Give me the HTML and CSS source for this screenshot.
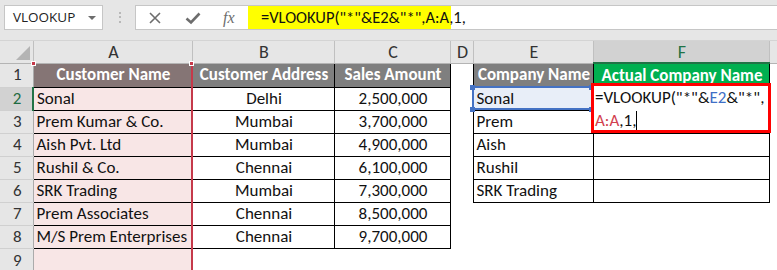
FILE: index.html
```html
<!DOCTYPE html>
<html>
	<head>
		<title>VLOOKUP wildcard</title>
		<meta name="viewport" content="width=device-width, initial-scale=1">
		<link rel="stylesheet" href="styles.css">
	</head>
	<body>
	<div id="toolbar">
		<div class="name-box">VLOOKUP<span class="caret"></span></div>
		<div class="grip"></div>
		<div class="fx-box">
			<div class="fx-buttons">
				<svg width="14" height="14" viewBox="0 0 14 14"><path d="M2 2 L12 12 M12 2 L2 12" stroke="#6d6d6d" stroke-width="1.6" fill="none"/></svg>
				<svg width="16" height="14" viewBox="0 0 16 14"><path d="M1.5 7.5 L6 11.5 L14.5 2.5" stroke="#6d6d6d" stroke-width="2.6" fill="none"/></svg>
				<span class="fx">fx</span>
			</div>
			<div class="formula"><span class="hl">=VLOOKUP("*"&amp;E2&amp;"*",A:A,1,</span></div>
		</div>
	</div>

	<div id="sheet-wrap">
		<table class="sheet">
			<colgroup>
				<col style="width:33px"><col style="width:159px"><col style="width:142px"><col style="width:116px">
				<col style="width:23px"><col style="width:120px"><col style="width:176px"><col>
			</colgroup>
			<tr class="col-heads">
				<th class="corner"><span class="tri"></span></th><th>A</th><th>B</th><th>C</th><th>D</th><th>E</th><th class="active">F</th><th></th>
			</tr>
			<tr class="r1">
				<td class="rh">1</td>
				<td class="hd hd-a">Customer Name</td><td class="hd">Customer Address</td><td class="hd">Sales Amount</td>
				<td></td><td class="hd">Company Name</td><td class="hd hd-green">Actual Company Name</td><td></td>
			</tr>
			<tr>
				<td class="rh rh-active">2</td>
				<td class="cell a">Sonal</td><td class="cell mid">Delhi</td><td class="cell mid">2,500,000</td>
				<td></td><td class="cell e2">Sonal</td><td class="cell"></td><td></td>
			</tr>
			<tr>
				<td class="rh">3</td>
				<td class="cell a">Prem Kumar &amp; Co.</td><td class="cell mid">Mumbai</td><td class="cell mid">3,700,000</td>
				<td></td><td class="cell">Prem</td><td class="cell"></td><td></td>
			</tr>
			<tr>
				<td class="rh">4</td>
				<td class="cell a">Aish Pvt. Ltd</td><td class="cell mid">Mumbai</td><td class="cell mid">4,900,000</td>
				<td></td><td class="cell">Aish</td><td class="cell"></td><td></td>
			</tr>
			<tr>
				<td class="rh">5</td>
				<td class="cell a">Rushil &amp; Co.</td><td class="cell mid">Chennai</td><td class="cell mid">6,100,000</td>
				<td></td><td class="cell">Rushil</td><td class="cell"></td><td></td>
			</tr>
			<tr>
				<td class="rh">6</td>
				<td class="cell a">SRK Trading</td><td class="cell mid">Mumbai</td><td class="cell mid">7,300,000</td>
				<td></td><td class="cell">SRK Trading</td><td class="cell"></td><td></td>
			</tr>
			<tr>
				<td class="rh">7</td>
				<td class="cell a">Prem Associates</td><td class="cell mid">Chennai</td><td class="cell mid">8,500,000</td>
				<td></td><td></td><td></td><td></td>
			</tr>
			<tr>
				<td class="rh">8</td>
				<td class="cell a">M/S Prem Enterprises</td><td class="cell mid">Chennai</td><td class="cell mid">9,700,000</td>
				<td></td><td></td><td></td><td></td>
			</tr>
			<tr class="r9">
				<td class="rh">9</td>
				<td class="a-fill"></td><td></td><td></td><td></td><td></td><td></td><td></td>
			</tr>
		</table>

		<!-- range highlight for A:A -->
		<div class="range-a"></div>
		<div class="knob red" style="left:31px;top:20px"></div>
		<div class="knob red" style="left:189px;top:20px"></div>

		<!-- range highlight for E2 -->
		<div class="range-e2"></div>
		<div class="knob blue" style="left:470px;top:44px"></div>
		<div class="knob blue" style="left:589px;top:44px"></div>
		<div class="knob blue" style="left:470px;top:66px"></div>
		<div class="knob blue" style="left:589px;top:66px"></div>

		<!-- in-cell editor -->
		<div class="editor">
			<div>=VLOOKUP("*"&amp;<span class="ref-blue">E2</span>&amp;"*",</div>
			<div><span class="ref-red">A:A</span>,1,<span class="cursor"></span></div>
		</div>
	</div>
	</body>
</html>
```

FILE: styles.css
```css
body{
	margin:0;
	background:#fff;
	font-family: "Carlito", "Lato", sans-serif;
	overflow:hidden;
	height:270px;
}
#toolbar{
	display:flex;
	align-items:flex-start;
	height:41px;
	background:#e6e6e6;
	padding-top:5px;
	box-sizing:border-box;
	border-bottom:1px solid #d4d4d4;
}
.name-box{
	margin-left:4px;
	width:99px;
	height:25px;
	box-sizing:border-box;
	background:#fff;
	border:1px solid #c6c6c6;
	font-family: "Open Sans", sans-serif;
	font-size:13.5px;
	line-height:23px;
	padding-left:8px;
	color:#222;
	position:relative;
}
.caret{
	position:absolute;
	right:6px;
	top:10px;
	border-left:4px solid transparent;
	border-right:4px solid transparent;
	border-top:4px solid #6d6d6d;
}
.grip{
	width:2px;
	height:11px;
	margin:7px 14px 0 16px;
	background:linear-gradient(#b8b8b8 0 2px, transparent 2px 4.5px, #b8b8b8 4.5px 6.5px, transparent 6.5px 9px, #b8b8b8 9px 11px);
}
.fx-box{
	flex:1;
	display:flex;
	height:25px;
	box-sizing:border-box;
	background:#fff;
	border:1px solid #c6c6c6;
	border-right:none;
}
.fx-buttons{
	width:100px;
	display:flex;
	align-items:center;
	padding-left:12px;
	gap:23px;
}
.fx{
	font-family: "Liberation Serif", serif;
	font-style:italic;
	font-size:16px;
	color:#6d6d6d;
	margin-left:-1px;
}
.formula{
	font-size:16.5px;
	line-height:23px;
	color:#111;
}
.hl{
	display:inline-block;
	background:#ffff00;
	padding:0 6px 0 13px;
	width:184px;
}

#sheet-wrap{
	position:relative;
}
.sheet{
	border-collapse:collapse;
	table-layout:fixed;
	width:785px;
	font-size:17px;
	color:#111;
}
.sheet td, .sheet th{
	padding:0 1px 0 3px;
	height:22px;
	line-height:20px;
	white-space:nowrap;
	overflow:hidden;
}
.col-heads th{
	height:21px;
	background:#e6e6e6;
	font-weight:normal;
	font-size:18px;
	color:#333;
	border-right:1px solid #c0c0c0;
	border-bottom:1px solid #b4b4b4;
}
.col-heads th.active{
	background:#d2d2d2;
	color:#217346;
	border-bottom:2px solid #217346;
}
.corner{
	position:relative;
}
.tri{
	position:absolute;
	right:3px;
	bottom:3px;
	border-left:14px solid transparent;
	border-bottom:14px solid #b4b4b4;
}
.r1 td{
	height:23px;
}
.r9 td{
	height:23px;
}
.rh{
	background:#e6e6e6;
	text-align:center;
	color:#333;
	font-size:17px;
	border-right:1px solid #ababab;
	border-bottom:1px solid #d0d0d0;
}
.rh-active{
	background:#d2d2d2;
	color:#1e6b41;
	border-right:2px solid #217346;
}
.hd{
	background:#7f7f7f;
	color:#fff;
	font-weight:bold;
	text-align:center;
	border:1px solid #000;
}
.hd-a{
	background:#857575;
}
.hd-green{
	background:#00b050;
}
.cell{
	border:1px solid #000;
}
.mid{
	text-align:center;
}
.a, .a-fill{
	background:#f8e6e6;
}
.e2{
	background:#e8eef8;
}

.range-a{
	position:absolute;
	left:191px;
	top:22px;
	width:2px;
	bottom:-40px;
	background:#c5394a;
}
.knob{
	position:absolute;
	width:5px;
	height:5px;
}
.knob.red{
	background:#c5394a;
	border:1px solid #fff;
	width:3px;
	height:3px;
}
.knob.blue{
	background:#4472c4;
}
.range-e2{
	position:absolute;
	left:472px;
	top:45px;
	width:117px;
	height:20px;
	border:2px solid #4472c4;
}
.editor{
	position:absolute;
	left:591px;
	top:42px;
	width:173px;
	height:44px;
	border:3px solid #ff0000;
	background:#fff;
	font-size:17px;
	line-height:23px;
	padding-left:1px;
	color:#111;
	white-space:nowrap;
}
.ref-blue{
	color:#3f6fc6;
}
.ref-red{
	color:#d2404f;
}
.cursor{
	display:inline-block;
	width:1px;
	height:19px;
	background:#000;
	vertical-align:-4px;
}
```
